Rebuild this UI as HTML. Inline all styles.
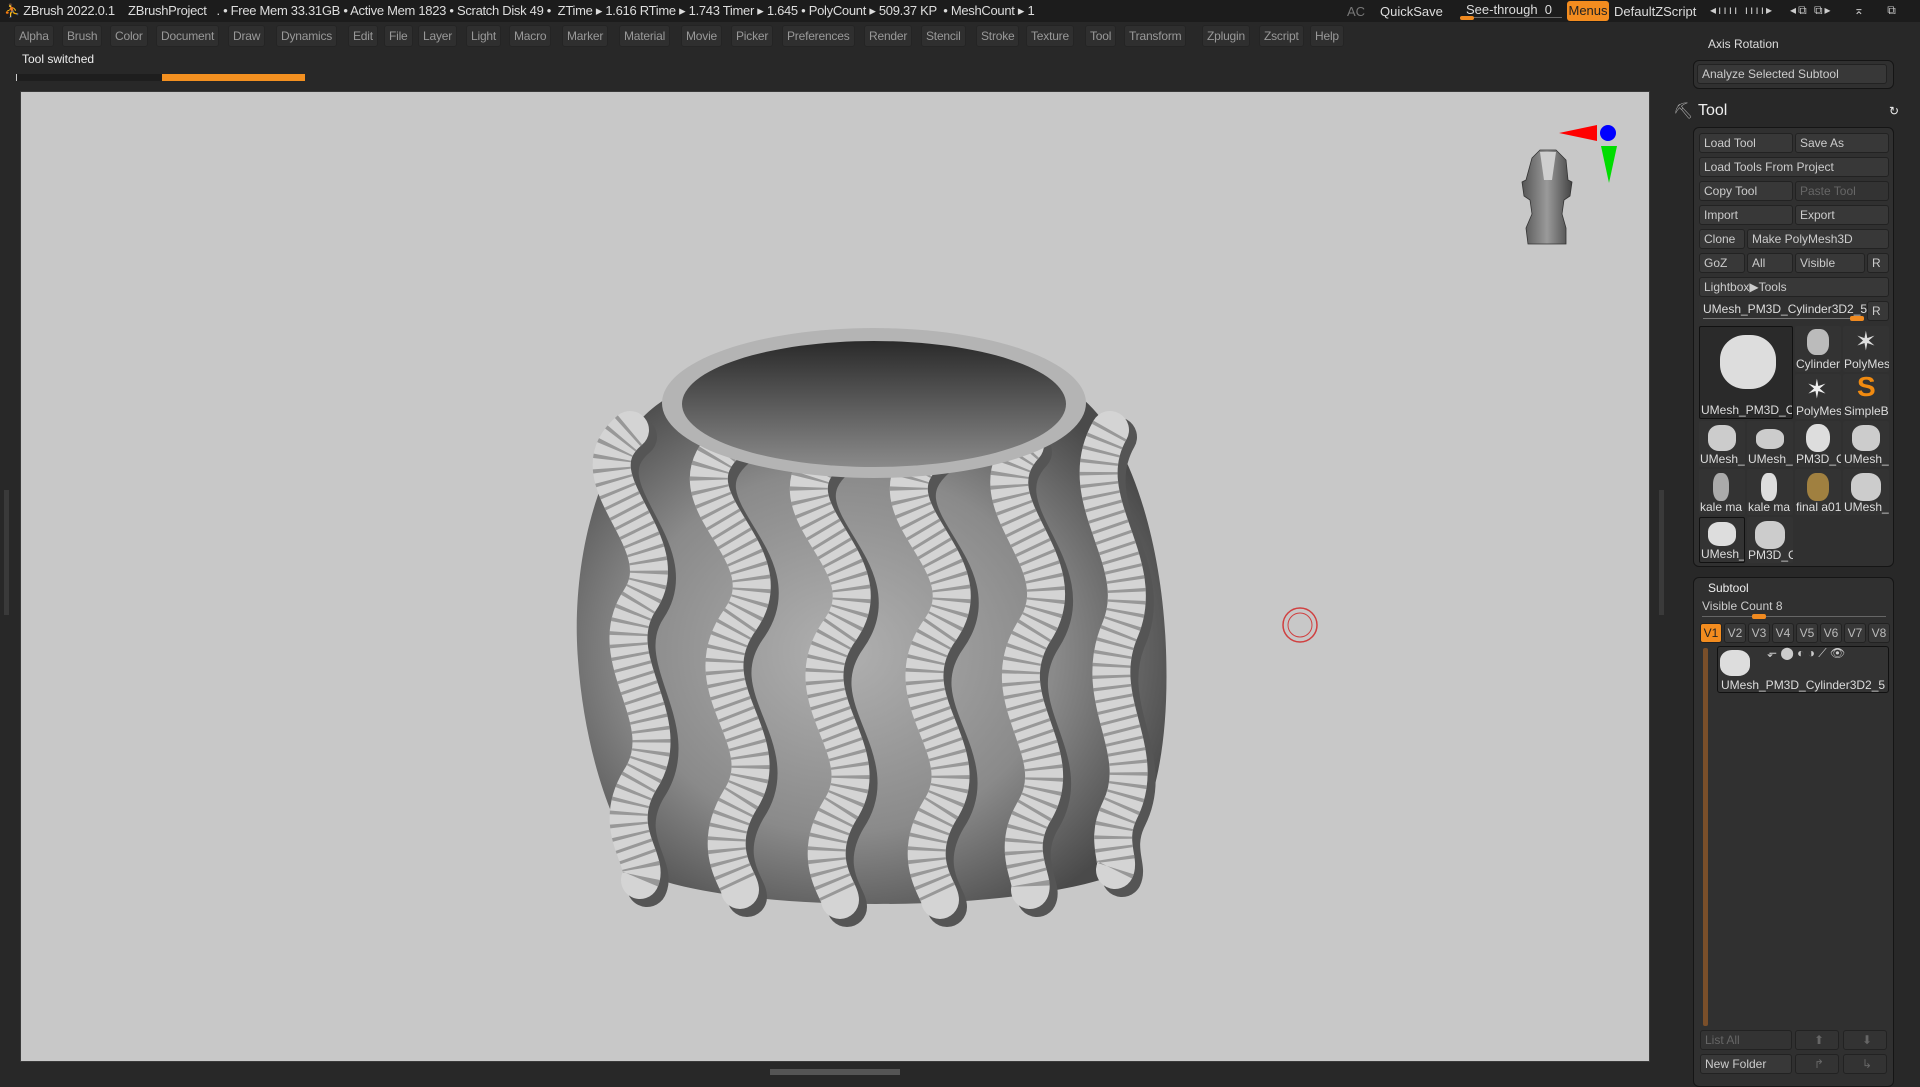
<!DOCTYPE html>
<html><head><meta charset="utf-8"><style>
*{margin:0;padding:0;box-sizing:border-box}
body{width:1920px;height:1080px;background:#282828;font-family:"Liberation Sans",sans-serif;color:#ddd;position:relative;overflow:hidden;font-size:12px}
.a{position:absolute;white-space:nowrap}
.top{left:0;top:0;width:1920px;height:22px;background:#1c1c1c}
.mb{position:absolute;top:25px;height:22px;background:#2f2f2f;border:1px solid #242424;border-radius:3px;color:#999;font-size:12px;line-height:20px;padding:0 4px;white-space:nowrap;letter-spacing:-0.2px}
.b{position:absolute;height:20px;background:#383838;border:1px solid #222;border-radius:3px;color:#ccc;font-size:12px;line-height:18px;padding-left:4px;overflow:hidden;white-space:nowrap}
.pn{position:absolute;border:1px solid #151515;border-radius:6px;background:#303030}
.th{position:absolute;background:#333;border-radius:2px;font-size:12px;color:#ddd;overflow:hidden;white-space:nowrap}
.th span{position:absolute;bottom:1px;left:1px}
.vb{position:absolute;top:623px;width:22px;height:20px;background:#383838;border:1px solid #222;border-radius:3px;font-size:12px;line-height:18px;text-align:center;color:#bbb}
</style></head><body>
<div class="a top"></div>
<div class="a" style="left:4px;top:3px;font-size:13px;color:#ddd;letter-spacing:-0.3px">⛹ ZBrush 2022.0.1 &nbsp;&nbsp; ZBrushProject &nbsp; . • Free Mem 33.31GB • Active Mem 1823 • Scratch Disk 49 • &nbsp;ZTime ▸ 1.616 RTime ▸ 1.743 Timer ▸ 1.645 • PolyCount ▸ 509.37 KP &nbsp;• MeshCount ▸ 1</div>
<div class="a" style="left:1347px;top:4px;color:#777;font-size:13px">AC</div>
<div class="a" style="left:1380px;top:4px;color:#ddd;font-size:13px">QuickSave</div>
<div class="a" style="left:1466px;top:2px;color:#ddd;font-size:13px">See-through &nbsp;0</div>
<div class="a" style="left:1460px;top:17px;width:102px;height:1px;background:#666"></div>
<div class="a" style="left:1460px;top:16px;width:14px;height:4px;background:#f08a20;border-radius:2px"></div>
<div class="a" style="left:1567px;top:1px;width:42px;height:20px;background:#f38c1f;border-radius:3px;color:#222;font-size:13px;line-height:20px;text-align:center">Menus</div>
<div class="a" style="left:1614px;top:4px;color:#ddd;font-size:13px">DefaultZScript</div>
<div class="a" style="left:1710px;top:3px;color:#ccc;font-size:12px;letter-spacing:2px">◂ıııı ıııı▸ &nbsp; ◂⧉ ⧉▸ &nbsp;&nbsp; ⌅ &nbsp;&nbsp; ⧉ &nbsp;&nbsp; ✕</div>

<div class="mb" style="left:14px">Alpha</div><div class="mb" style="left:62px">Brush</div><div class="mb" style="left:110px">Color</div><div class="mb" style="left:156px">Document</div><div class="mb" style="left:228px">Draw</div><div class="mb" style="left:276px">Dynamics</div><div class="mb" style="left:348px">Edit</div><div class="mb" style="left:384px">File</div><div class="mb" style="left:418px">Layer</div><div class="mb" style="left:466px">Light</div><div class="mb" style="left:509px">Macro</div><div class="mb" style="left:562px">Marker</div><div class="mb" style="left:619px">Material</div><div class="mb" style="left:681px">Movie</div><div class="mb" style="left:731px">Picker</div><div class="mb" style="left:782px">Preferences</div><div class="mb" style="left:864px">Render</div><div class="mb" style="left:921px">Stencil</div><div class="mb" style="left:976px">Stroke</div><div class="mb" style="left:1026px">Texture</div><div class="mb" style="left:1085px">Tool</div><div class="mb" style="left:1124px">Transform</div><div class="mb" style="left:1202px">Zplugin</div><div class="mb" style="left:1259px">Zscript</div><div class="mb" style="left:1310px">Help</div>

<div class="a" style="left:22px;top:52px;font-size:12px;color:#eee">Tool switched</div>
<div class="a" style="left:16px;top:74px;width:146px;height:7px;background:#1e1e1e"></div>
<div class="a" style="left:16px;top:74px;width:1px;height:7px;background:#ccc"></div>
<div class="a" style="left:162px;top:74px;width:143px;height:7px;background:#f39020"></div>

<div class="a" style="left:20px;top:91px;width:1630px;height:971px;background:#c8c8c8;border:1px solid #3a3a3a"></div>
<div class="a" style="left:4px;top:490px;width:5px;height:125px;background:#3a3a3a"></div>
<div class="a" style="left:1659px;top:490px;width:5px;height:125px;background:#3a3a3a"></div>
<div class="a" style="left:770px;top:1069px;width:130px;height:6px;background:#555"></div>

<svg class="a" style="left:0;top:0" width="1920" height="1080">
<defs>
<radialGradient id="bd" cx="0.45" cy="0.5" r="0.6"><stop offset="0" stop-color="#b0b0b0"/><stop offset="0.6" stop-color="#8a8a8a"/><stop offset="1" stop-color="#4a4a4a"/></radialGradient>
<linearGradient id="in" x1="0" y1="0" x2="0" y2="1"><stop offset="0" stop-color="#2a2a2a"/><stop offset="1" stop-color="#8a8a8a"/></linearGradient>
<linearGradient id="hd" x1="0" y1="0" x2="1" y2="0"><stop offset="0" stop-color="#555"/><stop offset="0.5" stop-color="#9a9a9a"/><stop offset="1" stop-color="#444"/></linearGradient>
</defs>
<path d="M664 400 C600 440 570 560 578 660 C585 760 620 860 660 880 C760 912 990 912 1100 880 C1150 840 1170 760 1166 650 C1162 540 1130 440 1084 400 Z" fill="url(#bd)"/>
<g fill="none" stroke-linecap="round">
<g stroke="#555" stroke-width="40" transform="translate(7,7)">
<path d="M630 430 C570 480 680 540 640 600 C600 660 680 720 640 780 C610 830 650 860 640 880"/>
<path d="M730 440 C660 500 790 550 740 620 C690 690 780 740 740 800 C710 850 740 880 740 890"/>
<path d="M830 450 C760 510 890 560 840 630 C790 700 880 750 840 810 C810 860 840 890 840 900"/>
<path d="M930 450 C860 510 990 560 940 630 C890 700 980 750 940 810 C910 860 940 890 940 900"/>
<path d="M1025 445 C970 505 1080 560 1035 630 C990 700 1070 750 1035 810 C1010 850 1035 880 1030 890"/>
<path d="M1110 430 C1070 500 1150 560 1120 630 C1090 700 1150 750 1120 810 C1105 840 1120 860 1115 870"/>
</g>
<g stroke="#d4d4d4" stroke-width="38">
<path d="M630 430 C570 480 680 540 640 600 C600 660 680 720 640 780 C610 830 650 860 640 880"/>
<path d="M730 440 C660 500 790 550 740 620 C690 690 780 740 740 800 C710 850 740 880 740 890"/>
<path d="M830 450 C760 510 890 560 840 630 C790 700 880 750 840 810 C810 860 840 890 840 900"/>
<path d="M930 450 C860 510 990 560 940 630 C890 700 980 750 940 810 C910 860 940 890 940 900"/>
<path d="M1025 445 C970 505 1080 560 1035 630 C990 700 1070 750 1035 810 C1010 850 1035 880 1030 890"/>
<path d="M1110 430 C1070 500 1150 560 1120 630 C1090 700 1150 750 1120 810 C1105 840 1120 860 1115 870"/>
</g>
<g stroke="#8a8a8a" stroke-width="38" stroke-dasharray="3 8" stroke-linecap="butt" opacity="0.8">
<path d="M630 430 C570 480 680 540 640 600 C600 660 680 720 640 780 C610 830 650 860 640 880"/>
<path d="M730 440 C660 500 790 550 740 620 C690 690 780 740 740 800 C710 850 740 880 740 890"/>
<path d="M830 450 C760 510 890 560 840 630 C790 700 880 750 840 810 C810 860 840 890 840 900"/>
<path d="M930 450 C860 510 990 560 940 630 C890 700 980 750 940 810 C910 860 940 890 940 900"/>
<path d="M1025 445 C970 505 1080 560 1035 630 C990 700 1070 750 1035 810 C1010 850 1035 880 1030 890"/>
<path d="M1110 430 C1070 500 1150 560 1120 630 C1090 700 1150 750 1120 810 C1105 840 1120 860 1115 870"/>
</g>
</g>
<ellipse cx="874" cy="403" rx="212" ry="75" fill="#b4b4b4"/>
<ellipse cx="874" cy="404" rx="192" ry="63" fill="url(#in)"/>
<circle cx="1300" cy="625" r="17" fill="none" stroke="#d04040" stroke-width="1.5"/>
<circle cx="1300" cy="625" r="12" fill="none" stroke="#d04040" stroke-width="1"/>
<polygon points="1559,133 1597,125 1597,141" fill="#f00"/>
<circle cx="1608" cy="133" r="8" fill="#00f"/>
<polygon points="1601,146 1617,146 1609,183" fill="#0d0"/>
<path d="M1532 158 L1540 150 L1556 150 L1566 160 L1568 180 L1572 182 L1570 196 L1564 200 L1562 214 L1566 228 L1566 244 L1528 244 L1526 228 L1532 214 L1530 200 L1524 196 L1522 182 L1526 180 Z" fill="url(#hd)" stroke="#333" stroke-width="0.8"/>
<path d="M1540 152 L1556 152 L1552 180 L1544 180 Z" fill="#cfcfcf"/>
</svg>

<div class="a" style="left:1708px;top:37px;font-size:12px;color:#ddd">Axis Rotation</div>
<div class="pn" style="left:1693px;top:60px;width:201px;height:29px"></div>
<div class="b" style="left:1697px;top:64px;width:190px">Analyze Selected Subtool</div>
<div class="a" style="left:1673px;top:101px;font-size:16px;color:#aaa">⛏</div>
<div class="a" style="left:1698px;top:102px;font-size:16px;color:#eee">Tool</div>
<div class="a" style="left:1889px;top:104px;font-size:12px;color:#eee">↻</div>
<div class="pn" style="left:1693px;top:127px;width:201px;height:440px"></div>
<div class="b" style="left:1699px;top:133px;width:94px">Load Tool</div><div class="b" style="left:1795px;top:133px;width:94px">Save As</div>
<div class="b" style="left:1699px;top:157px;width:190px">Load Tools From Project</div>
<div class="b" style="left:1699px;top:181px;width:94px">Copy Tool</div><div class="b" style="left:1795px;top:181px;width:94px;color:#666;background:#333">Paste Tool</div>
<div class="b" style="left:1699px;top:205px;width:94px">Import</div><div class="b" style="left:1795px;top:205px;width:94px">Export</div>
<div class="b" style="left:1699px;top:229px;width:46px">Clone</div><div class="b" style="left:1747px;top:229px;width:142px">Make PolyMesh3D</div>
<div class="b" style="left:1699px;top:253px;width:46px">GoZ</div><div class="b" style="left:1747px;top:253px;width:46px">All</div><div class="b" style="left:1795px;top:253px;width:70px">Visible</div><div class="b" style="left:1867px;top:253px;width:22px">R</div>
<div class="b" style="left:1699px;top:277px;width:190px">Lightbox▶Tools</div>
<div class="a" style="left:1703px;top:302px;font-size:12px;color:#ddd">UMesh_PM3D_Cylinder3D2_5</div>
<div class="a" style="left:1703px;top:318px;width:152px;height:1px;background:#777"></div>
<div class="a" style="left:1850px;top:316px;width:14px;height:5px;background:#f08a20;border-radius:2px"></div>
<div class="b" style="left:1867px;top:301px;width:22px">R</div>
<div class="th" style="left:1699px;top:326px;width:94px;height:93px;background:#2a2a2a;border:1px solid #111"><div style="position:absolute;left:20px;top:8px;width:56px;height:54px;border-radius:45%;background:#ddd"></div><span>UMesh_PM3D_C</span></div>
<div class="th" style="left:1795px;top:326px;width:46px;height:46px"><div style="position:absolute;left:12px;top:3px;width:22px;height:26px;background:#bbb;border-radius:40%"></div><span>Cylinder</span></div>
<div class="th" style="left:1843px;top:326px;width:46px;height:46px"><div style="position:absolute;left:12px;top:0;font-size:26px;color:#ddd">✶</div><span>PolyMes</span></div>
<div class="th" style="left:1795px;top:374px;width:46px;height:45px"><div style="position:absolute;left:11px;top:0;font-size:26px;color:#eee">✶</div><span>PolyMes</span></div>
<div class="th" style="left:1843px;top:374px;width:46px;height:45px"><div style="position:absolute;left:14px;top:-3px;font-size:28px;color:#f08a10;font-weight:bold">S</div><span>SimpleB</span></div>
<div class="th" style="left:1699px;top:421px;width:46px;height:46px"><div style="position:absolute;left:9px;top:4px;width:28px;height:26px;background:#ccc;border-radius:40%"></div><span>UMesh_</span></div>
<div class="th" style="left:1747px;top:421px;width:46px;height:46px"><div style="position:absolute;left:9px;top:8px;width:28px;height:20px;background:#ccc;border-radius:40%"></div><span>UMesh_</span></div>
<div class="th" style="left:1795px;top:421px;width:46px;height:46px"><div style="position:absolute;left:11px;top:3px;width:24px;height:28px;background:#ddd;border-radius:45%"></div><span>PM3D_C</span></div>
<div class="th" style="left:1843px;top:421px;width:46px;height:46px"><div style="position:absolute;left:9px;top:4px;width:28px;height:26px;background:#ccc;border-radius:40%"></div><span>UMesh_</span></div>
<div class="th" style="left:1699px;top:469px;width:46px;height:46px"><div style="position:absolute;left:14px;top:4px;width:16px;height:28px;background:#aaa;border-radius:40%"></div><span>kale ma</span></div>
<div class="th" style="left:1747px;top:469px;width:46px;height:46px"><div style="position:absolute;left:14px;top:4px;width:16px;height:28px;background:#ddd;border-radius:40%"></div><span>kale ma</span></div>
<div class="th" style="left:1795px;top:469px;width:46px;height:46px"><div style="position:absolute;left:12px;top:4px;width:22px;height:28px;background:#a08040;border-radius:40%"></div><span>final a01</span></div>
<div class="th" style="left:1843px;top:469px;width:46px;height:46px"><div style="position:absolute;left:8px;top:4px;width:30px;height:28px;background:#ccc;border-radius:40%"></div><span>UMesh_</span></div>
<div class="th" style="left:1699px;top:517px;width:46px;height:46px;border:1px solid #111"><div style="position:absolute;left:8px;top:4px;width:28px;height:24px;background:#ddd;border-radius:40%"></div><span>UMesh_</span></div>
<div class="th" style="left:1747px;top:517px;width:46px;height:46px"><div style="position:absolute;left:8px;top:4px;width:30px;height:28px;background:#ccc;border-radius:40%"></div><span>PM3D_C</span></div>

<div class="pn" style="left:1693px;top:577px;width:201px;height:510px"></div>
<div class="a" style="left:1708px;top:581px;font-size:12px;color:#eee">Subtool</div>
<div class="a" style="left:1702px;top:599px;font-size:12px;color:#ccc">Visible Count 8</div>
<div class="a" style="left:1702px;top:616px;width:184px;height:1px;background:#666"></div>
<div class="a" style="left:1752px;top:614px;width:14px;height:5px;background:#f08a20;border-radius:2px"></div>
<div class="vb" style="left:1700px;background:#f38c1f;color:#222">V1</div><div class="vb" style="left:1724px">V2</div><div class="vb" style="left:1748px">V3</div><div class="vb" style="left:1772px">V4</div><div class="vb" style="left:1796px">V5</div><div class="vb" style="left:1820px">V6</div><div class="vb" style="left:1844px">V7</div><div class="vb" style="left:1868px">V8</div>
<div class="a" style="left:1703px;top:648px;width:5px;height:378px;background:#7a4f2a;border-radius:2px"></div>
<div class="a" style="left:1717px;top:646px;width:172px;height:47px;background:#333;border:1px solid #111;border-radius:3px"></div>
<div class="a" style="left:1720px;top:650px;width:30px;height:26px;background:#ddd;border-radius:40%"></div>
<div class="a" style="left:1767px;top:646px;font-size:12px;color:#ccc">⬐ ⬤ ◐ ◑ ⟋ 👁</div>
<div class="a" style="left:1721px;top:678px;font-size:12px;color:#ddd">UMesh_PM3D_Cylinder3D2_5</div>
<div class="b" style="left:1700px;top:1030px;width:92px;color:#666;background:#333">List All</div>
<div class="b" style="left:1795px;top:1030px;width:44px;background:#333;color:#666;text-align:center">⬆</div>
<div class="b" style="left:1843px;top:1030px;width:44px;background:#333;color:#666;text-align:center">⬇</div>
<div class="b" style="left:1700px;top:1054px;width:92px">New Folder</div>
<div class="b" style="left:1795px;top:1054px;width:44px;background:#333;color:#666;text-align:center">↱</div>
<div class="b" style="left:1843px;top:1054px;width:44px;background:#333;color:#666;text-align:center">↳</div>
</body></html>
